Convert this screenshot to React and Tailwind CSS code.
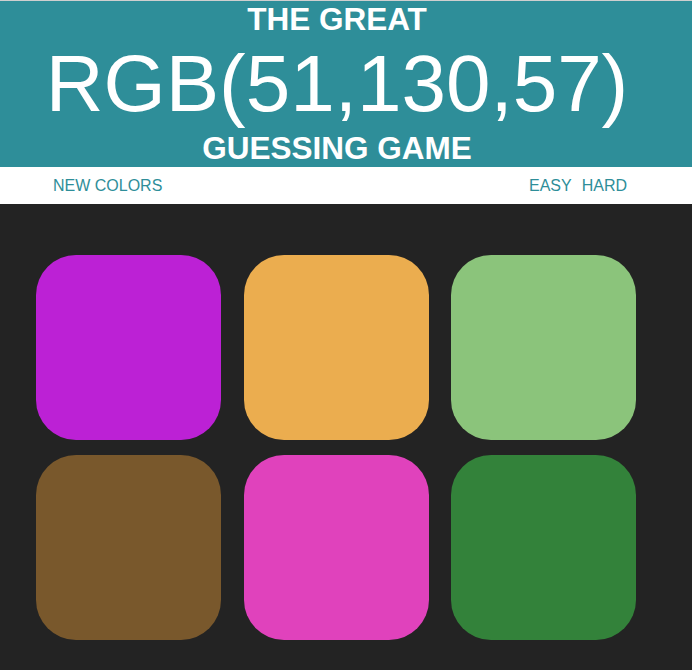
import React from 'react';

const squares = ['#bc21d5', '#ebad4f', '#8bc47b', '#79582c', '#e042bc', '#33823a'];

const App = () => {
  return (
    <div className="h-[670px] overflow-hidden bg-[#232323] font-['Liberation_Sans',Arial,sans-serif]">
      {/* Title */}
      <div className="border-t border-[#cfcfcf] bg-[#2e8e99] text-white text-center pr-[18px]">
        <h1 className="font-bold uppercase leading-[normal]">
          <span className="block text-[31.5px] leading-[normal]">The Great</span>
          <span className="block text-[80px] font-normal leading-[normal]">RGB(51,130,57)</span>
          <span className="block text-[31.5px] leading-[normal]">Guessing Game</span>
        </h1>
      </div>

      {/* Controls */}
      <div className="bg-white h-[37px] flex items-center text-[16px] text-[#2e8e99]">
        <button className="ml-[53px] leading-[37px] uppercase">New Colors</button>
        <span id="message" className="flex-1"></span>
        <button className="leading-[37px] uppercase">Easy</button>
        <button className="ml-[10px] mr-[65px] leading-[37px] uppercase">Hard</button>
      </div>

      {/* Squares */}
      <div className="grid grid-cols-[185px_185px_185px] gap-x-[22.5px] gap-y-[15px] pl-[36px] pt-[51px] pb-[30px]">
        {squares.map((c, i) => (
          <div
            key={i}
            className="w-[185px] h-[185px] rounded-[40px]"
            style={{ backgroundColor: c }}
          />
        ))}
      </div>
    </div>
  );
};

export default App;
